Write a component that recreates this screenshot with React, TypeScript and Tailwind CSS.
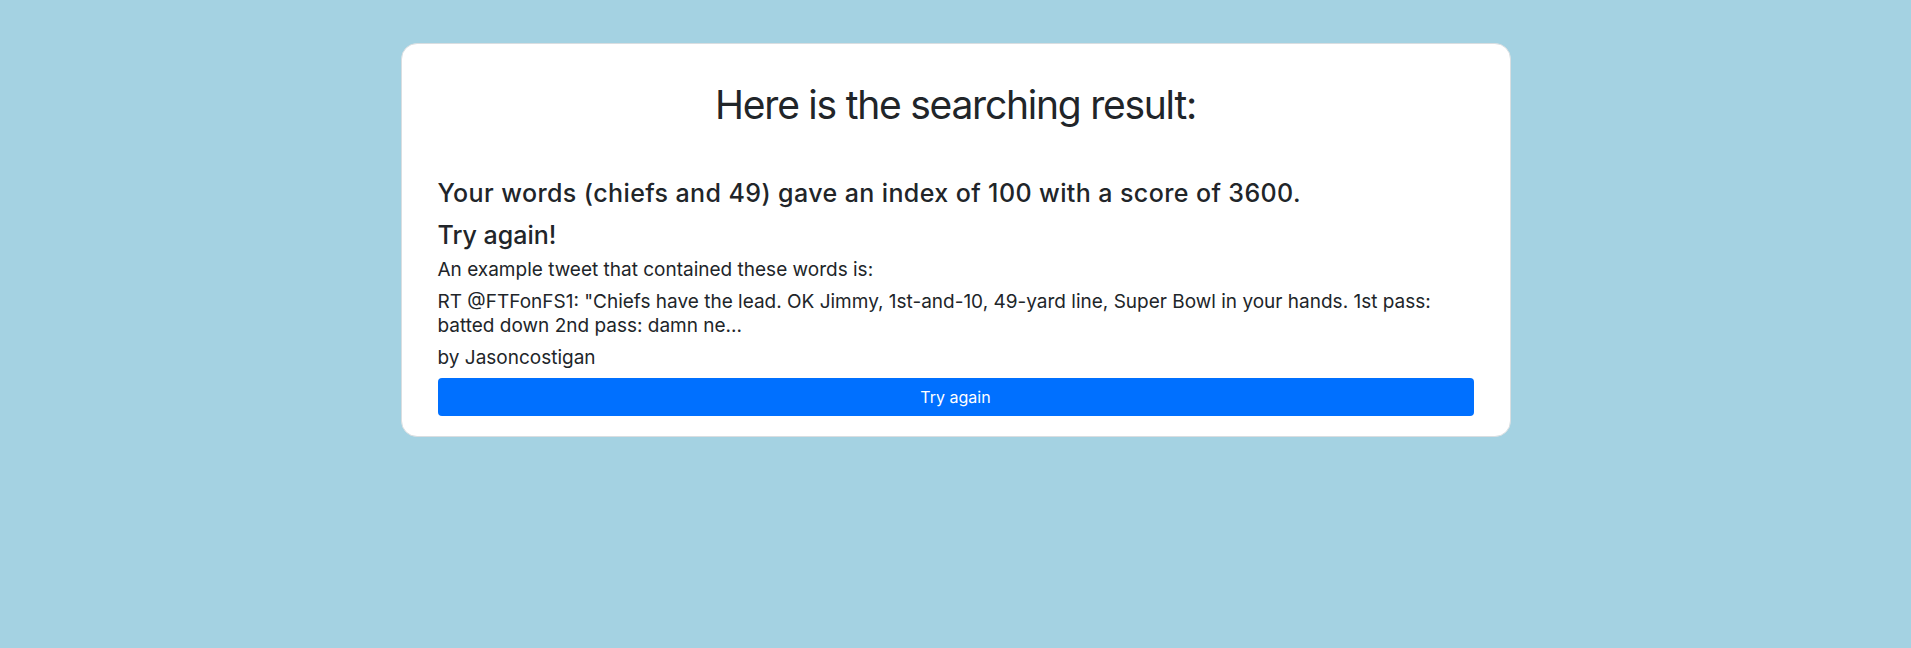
export default function App() {
  return (
    <div
      className="min-h-[648px] bg-[#a4d2e2] pt-[43px]"
      style={{ fontFamily: "Inter, 'Noto Sans', sans-serif" }}
    >
      <div className="mx-auto w-[1110px] rounded-[16px] border border-[#d9dee1] bg-white px-[36px] pt-[37px] pb-[20px] text-[#212529]">
        <h1 className="mb-[50px] text-center text-[39px] leading-[47px] font-normal tracking-[-1.24px]">
          Here is the searching result:
        </h1>
        <h3 className="mb-[12px] text-[25px] leading-[30px] font-medium tracking-[0.4px]">
          Your words (chiefs and 49) gave an index of 100 with a score of 3600.
        </h3>
        <h3 className="mb-[8px] text-[25px] leading-[30px] font-medium">Try again!</h3>
        <p className="mb-2 text-[19px] leading-[24px]">
          An example tweet that contained these words is:
        </p>
        <p className="mb-2 text-[19px] leading-[24px]">
          RT @FTFonFS1: "Chiefs have the lead. OK Jimmy, 1st-and-10, 49-yard line, Super Bowl in your hands. 1st pass:
          batted down 2nd pass: damn ne...
        </p>
        <p className="mb-2 text-[19px] leading-[24px]">by Jasoncostigan</p>
        <button className="block h-[38px] w-full rounded-[4px] bg-[#0070ff] text-[16px] text-white">
          Try again
        </button>
      </div>
    </div>
  );
}
